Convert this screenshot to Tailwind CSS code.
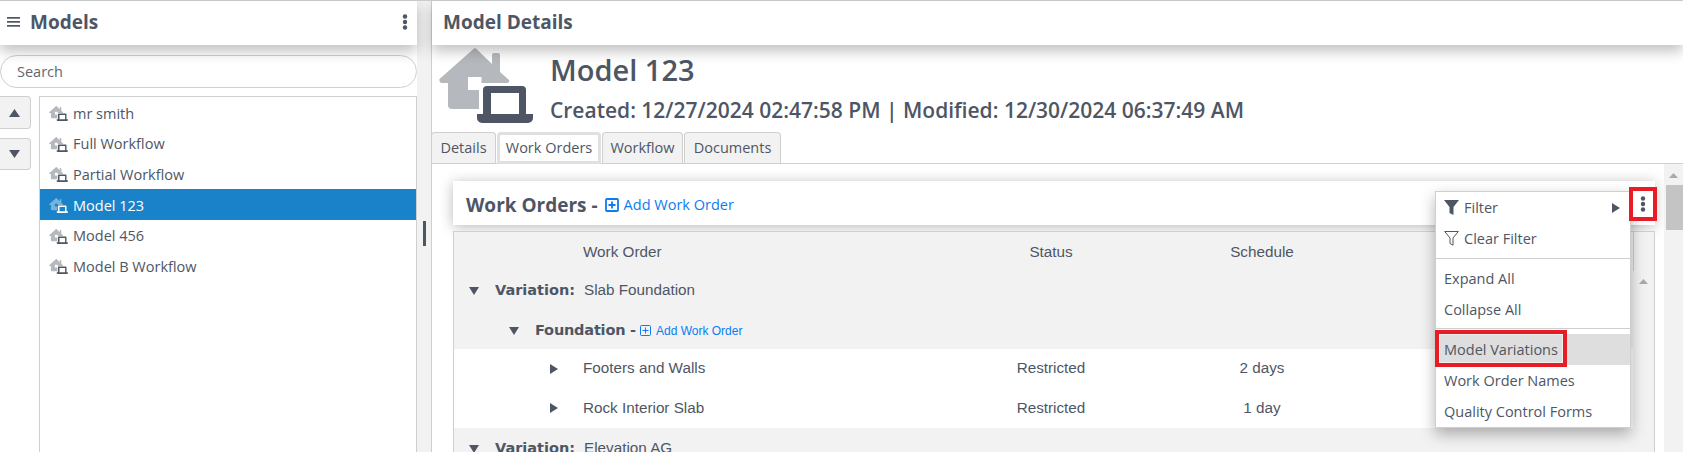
<!DOCTYPE html>
<html lang="en">
<head>
  <meta charset="UTF-8" />
  <title>Model Details</title>
  <script src="https://cdn.jsdelivr.net/npm/@tailwindcss/browser@4"></script>
</head>
<body class="h-[452px] w-[1683px] overflow-hidden bg-white font-['Open_Sans',sans-serif] text-[14.5px] text-[#4e5665]">
  <div class="flex h-full border-t border-[#cfcfcf]">

    <!-- Left panel -->
    <aside class="flex w-[417px] shrink-0 flex-col bg-white">
      <header class="relative z-10 flex h-[44px] shrink-0 items-center bg-white pb-[2px] pl-[7px] pr-[9px] shadow-[0_6px_14px_rgba(0,0,0,0.25)]">
        <svg class="h-[14px] w-[14px]" viewBox="0 0 14 14" fill="#4e5665"><rect y="2" width="13" height="1.7"/><rect y="6" width="13" height="1.7"/><rect y="10" width="13" height="1.7"/></svg>
        <h2 class="ml-[9px] text-[19px] font-bold">Models</h2>
        <svg class="ml-auto h-[16px] w-[6px]" viewBox="0 0 6 16" fill="#4e5665"><circle cx="3" cy="2.500" r="2.200"/><circle cx="3" cy="8" r="2.200"/><circle cx="3" cy="13.500" r="2.200"/></svg>
      </header>
      <div class="pt-[10px]">
        <div class="flex h-[33px] items-center rounded-full border border-[#cfcfcf] bg-white pl-[16px] text-[#5f6673]">Search</div>
      </div>
      <div class="mt-[8px] flex min-h-0 flex-1">
        <div class="flex w-[39px] shrink-0 flex-col gap-[9px]">
          <button class="flex h-[33px] w-[31px] items-center justify-center rounded-r-[4px] border border-l-0 border-[#cfcfcf] bg-[#f2f2f2] pr-[2px]"><svg width="11" height="8" viewBox="0 0 11 8" fill="#4e5665"><path d="M5.500 0 11 8H0z"/></svg></button>
          <button class="flex h-[32px] w-[31px] items-center justify-center rounded-r-[4px] border border-l-0 border-[#cfcfcf] bg-[#f2f2f2] pr-[2px]"><svg width="11" height="8" viewBox="0 0 11 8" fill="#4e5665"><path d="M0 0h11L5.500 8z"/></svg></button>
        </div>
        <ul class="flex w-[378px] flex-col border-x border-t border-[#cfcfcf]">
          <li class="flex h-[31px] items-center pl-[9px] pt-[2px]"><svg class="mr-[5px] h-[15px] w-[19px]" viewBox="0 0 94 75"><path d="M.5 31 35 .5q1-1 2 0L53 16V7a2 2 0 0 1 2-2h4a2 2 0 0 1 2 2v17l9 8q1 3-2 3H42.500v-6H29v13h11v19H13a4 4 0 0 1-4-4V35H3q-3 0-2.500-4z" fill="#b5b8bd"/><path fill-rule="evenodd" d="M44 42a4 4 0 0 1 4-4h35a4 4 0 0 1 4 4v24h7v4a5 5 0 0 1-5 5H43a5 5 0 0 1-5-5v-4h6zM52 45v21h28V45z" fill="#4e5665"/></svg>mr smith</li>
          <li class="flex h-[30px] items-center pl-[9px] pt-[2px]"><svg class="mr-[5px] h-[15px] w-[19px]" viewBox="0 0 94 75"><path d="M.5 31 35 .5q1-1 2 0L53 16V7a2 2 0 0 1 2-2h4a2 2 0 0 1 2 2v17l9 8q1 3-2 3H42.500v-6H29v13h11v19H13a4 4 0 0 1-4-4V35H3q-3 0-2.500-4z" fill="#b5b8bd"/><path fill-rule="evenodd" d="M44 42a4 4 0 0 1 4-4h35a4 4 0 0 1 4 4v24h7v4a5 5 0 0 1-5 5H43a5 5 0 0 1-5-5v-4h6zM52 45v21h28V45z" fill="#4e5665"/></svg>Full Workflow</li>
          <li class="flex h-[31px] items-center pl-[9px] pt-[2px]"><svg class="mr-[5px] h-[15px] w-[19px]" viewBox="0 0 94 75"><path d="M.5 31 35 .5q1-1 2 0L53 16V7a2 2 0 0 1 2-2h4a2 2 0 0 1 2 2v17l9 8q1 3-2 3H42.500v-6H29v13h11v19H13a4 4 0 0 1-4-4V35H3q-3 0-2.500-4z" fill="#b5b8bd"/><path fill-rule="evenodd" d="M44 42a4 4 0 0 1 4-4h35a4 4 0 0 1 4 4v24h7v4a5 5 0 0 1-5 5H43a5 5 0 0 1-5-5v-4h6zM52 45v21h28V45z" fill="#4e5665"/></svg>Partial Workflow</li>
          <li class="flex h-[31px] items-center bg-[#1a82c8] pl-[9px] pt-[2px] text-white"><svg class="mr-[5px] h-[15px] w-[19px]" viewBox="0 0 94 75"><path d="M.5 31 35 .5q1-1 2 0L53 16V7a2 2 0 0 1 2-2h4a2 2 0 0 1 2 2v17l9 8q1 3-2 3H42.500v-6H29v13h11v19H13a4 4 0 0 1-4-4V35H3q-3 0-2.500-4z" fill="#76b3dd"/><path fill-rule="evenodd" d="M44 42a4 4 0 0 1 4-4h35a4 4 0 0 1 4 4v24h7v4a5 5 0 0 1-5 5H43a5 5 0 0 1-5-5v-4h6zM52 45v21h28V45z" fill="#ffffff"/></svg>Model 123</li>
          <li class="flex h-[30px] items-center pl-[9px] pt-[2px]"><svg class="mr-[5px] h-[15px] w-[19px]" viewBox="0 0 94 75"><path d="M.5 31 35 .5q1-1 2 0L53 16V7a2 2 0 0 1 2-2h4a2 2 0 0 1 2 2v17l9 8q1 3-2 3H42.500v-6H29v13h11v19H13a4 4 0 0 1-4-4V35H3q-3 0-2.500-4z" fill="#b5b8bd"/><path fill-rule="evenodd" d="M44 42a4 4 0 0 1 4-4h35a4 4 0 0 1 4 4v24h7v4a5 5 0 0 1-5 5H43a5 5 0 0 1-5-5v-4h6zM52 45v21h28V45z" fill="#4e5665"/></svg>Model 456</li>
          <li class="flex h-[31px] items-center pl-[9px] pt-[2px]"><svg class="mr-[5px] h-[15px] w-[19px]" viewBox="0 0 94 75"><path d="M.5 31 35 .5q1-1 2 0L53 16V7a2 2 0 0 1 2-2h4a2 2 0 0 1 2 2v17l9 8q1 3-2 3H42.500v-6H29v13h11v19H13a4 4 0 0 1-4-4V35H3q-3 0-2.500-4z" fill="#b5b8bd"/><path fill-rule="evenodd" d="M44 42a4 4 0 0 1 4-4h35a4 4 0 0 1 4 4v24h7v4a5 5 0 0 1-5 5H43a5 5 0 0 1-5-5v-4h6zM52 45v21h28V45z" fill="#4e5665"/></svg>Model B Workflow</li>
        </ul>
      </div>
    </aside>

    <!-- Splitter -->
    <div class="flex w-[14px] shrink-0 items-center justify-center bg-[#f2f2f2]">
      <div class="mt-[13px] h-[25px] w-[3px] bg-[#4e5665]"></div>
    </div>

    <!-- Details -->
    <main class="relative z-20 flex min-w-0 flex-1 flex-col border-l border-[#cfcfcf]">
      <header class="relative z-10 flex h-[44px] shrink-0 items-center bg-white pb-[2px] pl-[11px] text-[19px] font-bold shadow-[0_6px_14px_rgba(0,0,0,0.25)]">Model Details</header>
      <div class="flex h-[87px] shrink-0 pl-[7px]">
        <svg class="mt-[3px] h-[75px] w-[94px] shrink-0" viewBox="0 0 94 75">
          <path d="M.5 31 35 .5q1-1 2 0L53 16V7a2 2 0 0 1 2-2h4a2 2 0 0 1 2 2v17l9 8q1 3-2 3H42.500v-6H29v13h11v19H13a4 4 0 0 1-4-4V35H3q-3 0-2.500-4z" fill="#b5b8bd"/>
          <path fill-rule="evenodd" d="M44 42a4 4 0 0 1 4-4h35a4 4 0 0 1 4 4v24h7v4a5 5 0 0 1-5 5H43a5 5 0 0 1-5-5v-4h6zM52 45v21h28V45z" fill="#4e5665"/>
        </svg>
        <div class="ml-[17px] flex flex-col">
          <h1 class="mt-[3px] text-[29px] font-semibold leading-[44px]">Model 123</h1>
          <p class="mt-[3px] text-[21px] font-semibold leading-[30px]">Created: 12/27/2024 02:47:58 PM | Modified: 12/30/2024 06:37:49 AM</p>
        </div>
      </div>
      <nav class="flex h-[32px] shrink-0 items-end gap-[1px] border-b border-[#cfcfcf]">
        <a class="-ml-[1px] flex h-[31px] w-[65px] items-center justify-center rounded-t-[4px] border border-b-0 border-[#cfcfcf] bg-[#f2f2f2]">Details</a>
        <a class="-mb-[1px] flex h-[32px] w-[104px] items-center justify-center rounded-t-[4px] border-[3px] border-[#e0e0e0] bg-white">Work Orders</a>
        <a class="flex h-[31px] w-[81px] items-center justify-center rounded-t-[4px] border border-b-0 border-[#cfcfcf] bg-[#f2f2f2]">Workflow</a>
        <a class="flex h-[31px] w-[97px] items-center justify-center rounded-t-[4px] border border-b-0 border-[#cfcfcf] bg-[#f2f2f2]">Documents</a>
      </nav>
      <div class="flex min-h-0 flex-1">
        <section class="flex min-w-0 flex-1 flex-col overflow-hidden pl-[21px] pr-[9px] pt-[17px]">
          <div class="flex h-[44px] shrink-0 items-center bg-white pl-[13px] pt-[4px] shadow-[0_2px_14px_rgba(0,0,0,0.28)]">
            <h3 class="text-[19px] font-bold">Work Orders -</h3>
            <a class="ml-[7px] flex items-center text-[#0d7cf2]"><svg class="mr-[5px] h-[14px] w-[14px]" viewBox="0 0 14 14" fill="none" stroke="#0d7cf2" stroke-width="1.800"><rect x="1" y="1" width="12" height="12" rx="1"/><path d="M7 3.500v7M3.500 7h7"/></svg>Add Work Order</a>
          </div>
          <div class="relative mt-[6px] flex min-h-0 flex-1 overflow-hidden border border-b-0 border-[#cfcfcf] bg-white font-['Liberation_Sans',sans-serif] text-[15.250px]">
            <div class="min-w-0 flex-1">
              <div class="grid h-[39px] grid-cols-[497px_200px_222px] items-center bg-[#f2f2f2] pt-[2px]"><span class="pl-[129px]">Work Order</span><span class="text-center">Status</span><span class="text-center">Schedule</span></div>
              <div class="flex h-[39px] items-center bg-[#f2f2f2] pl-[15px]"><svg class="mr-[16px]" width="10" height="8" viewBox="0 0 10 8" fill="#4e5665"><path d="M0 0h10L5 8z"/></svg><b class="w-[89px] font-['DejaVu_Sans',sans-serif] text-[14.500px]">Variation:</b>Slab Foundation</div>
              <div class="flex h-[39px] items-center bg-[#f2f2f2] pl-[55px] pt-[2px]"><svg class="mr-[16px]" width="10" height="8" viewBox="0 0 10 8" fill="#4e5665"><path d="M0 0h10L5 8z"/></svg><b class="font-['DejaVu_Sans',sans-serif] text-[14.500px] tracking-[-0.2px]">Foundation -</b><a class="ml-[4px] flex items-center text-[12px] text-[#0d7cf2]"><svg class="mr-[5px] h-[11px] w-[11px]" viewBox="0 0 11 11" fill="none" stroke="#0d7cf2" stroke-width="1"><rect x=".5" y=".5" width="10" height="10" rx="1"/><path d="M5.500 2.500v6M2.500 5.500h6"/></svg>Add Work Order</a></div>
              <div class="grid h-[39px] grid-cols-[497px_200px_222px] items-center"><span class="flex items-center pl-[96px]"><svg class="mr-[25px]" width="8" height="10" viewBox="0 0 8 10" fill="#4e5665"><path d="M0 0l8 5-8 5z"/></svg>Footers and Walls</span><span class="text-center">Restricted</span><span class="text-center">2 days</span></div>
              <div class="grid h-[40px] grid-cols-[497px_200px_222px] items-center"><span class="flex items-center pl-[96px]"><svg class="mr-[25px]" width="8" height="10" viewBox="0 0 8 10" fill="#4e5665"><path d="M0 0l8 5-8 5z"/></svg>Rock Interior Slab</span><span class="text-center">Restricted</span><span class="text-center">1 day</span></div>
              <div class="flex h-[39px] items-center bg-[#f2f2f2] pl-[15px] pt-[2px]"><svg class="mr-[16px]" width="10" height="8" viewBox="0 0 10 8" fill="#4e5665"><path d="M0 0h10L5 8z"/></svg><b class="w-[89px] font-['DejaVu_Sans',sans-serif] text-[14.500px]">Variation:</b>Elevation AG</div>
            </div>
            <!-- inner scrollbar -->
            <div class="w-[21px] shrink-0 bg-[#f2f2f2]">
              <div class="h-[39px] border-l border-[#cfcfcf]"></div>
              <div class="flex justify-center pt-[8px]"><svg width="9" height="5" viewBox="0 0 9 5" fill="#aaaaaa"><path d="M4.500 0 9 5H0z"/></svg></div>
            </div>
          </div>
        </section>
        <!-- page scrollbar -->
        <div class="w-[19px] shrink-0 bg-[#f2f2f2] pl-[2px]">
          <div class="flex justify-center pt-[9px] pr-[2px]"><svg width="9" height="5" viewBox="0 0 9 5" fill="#aaaaaa"><path d="M4.500 0 9 5H0z"/></svg></div>
          <div class="mt-[7px] h-[45px] bg-[#c4c4c4]"></div>
        </div>
      </div>

      <!-- Action menu -->
      <div class="absolute left-[1003px] top-[190px] z-20 w-[196px] border border-[#cfcfcf] bg-white shadow-[0_6px_14px_rgba(0,0,0,0.3)]">
        <div class="flex h-[31px] items-center pl-[8px] pr-[10px]"><svg class="mr-[5px] h-[15px] w-[15px]" viewBox="0 0 15 15" fill="#4e5665"><path d="M0 0h15L9.500 7v8L5.500 13V7z"/></svg>Filter<svg class="ml-auto" width="8" height="10" viewBox="0 0 8 10" fill="#4e5665"><path d="M0 0l8 5-8 5z"/></svg></div>
        <div class="flex h-[31px] items-center pl-[8px]"><svg class="mr-[5px] h-[15px] w-[15px]" viewBox="0 0 15 15" fill="none" stroke="#4e5665"><path d="M.7.500h13.600L9 7v7.200L6 12.500V7z"/></svg>Clear Filter</div>
        <div class="mt-[4px] border-t border-[#cfcfcf] pt-[4px]">
          <div class="flex h-[31px] items-center pl-[8px]">Expand All</div>
          <div class="flex h-[31px] items-center pl-[8px]">Collapse All</div>
        </div>
        <div class="mt-[3px] border-t border-[#cfcfcf] pt-[5px]">
          <div class="flex h-[31px] items-center bg-[#dedede] pl-[8px]">Model Variations</div>
          <div class="flex h-[31px] items-center pl-[8px]">Work Order Names</div>
          <div class="flex h-[31px] items-center pl-[8px]">Quality Control Forms</div>
        </div>
        <div class="absolute -left-[1px] top-[138px] h-[37px] w-[132px] border-[4px] border-[#e81c24] shadow-[inset_0_0_0_1px_rgba(255,255,255,0.5)]"></div>
      </div>

      <!-- Highlighted kebab -->
      <div class="absolute left-[1197px] top-[186px] z-30 flex h-[34px] w-[28px] items-center justify-center border-[4px] border-[#e81c24] bg-white">
        <svg class="h-[16px] w-[6px]" viewBox="0 0 6 16" fill="#4e5665"><circle cx="3" cy="2.500" r="2.200"/><circle cx="3" cy="8" r="2.200"/><circle cx="3" cy="13.500" r="2.200"/></svg>
      </div>
    </main>
  </div>
</body>
</html>
